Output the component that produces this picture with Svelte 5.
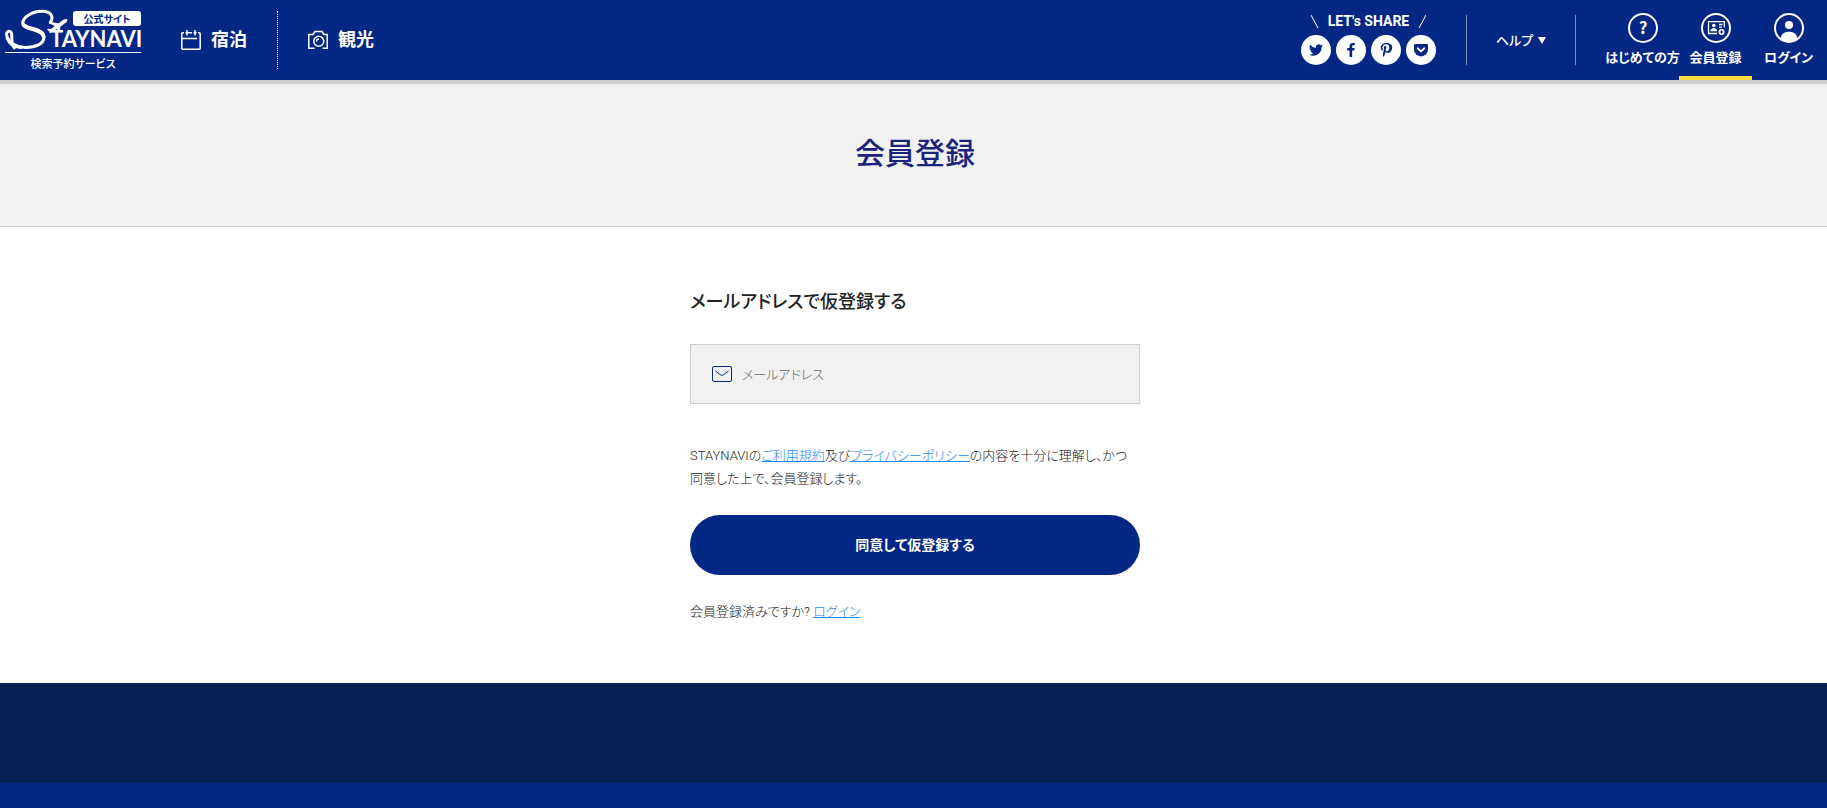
<script>
  let email = "";
</script>

<div class="page">
  <header class="header">
    <a class="logo" href="#/" aria-label="STAYNAVI">
      <svg width="138" height="62" viewBox="5 10 138 62">
        <g transform="scale(0.3333)" fill="none" stroke="#fff" stroke-linecap="round">
          <path
            stroke-width="9"
            d="M151 70C160 58 158 40 132 37C98 34 64 56 69 77C74 93 122 88 131 112C136 134 104 147 70 145C44 143 24 129 20 109C18 96 33 92 35 104C36 120 34 137 43 147"
          />
          <path stroke-width="12" d="M72 79C82 92 126 88 131 112" />
          <path stroke-width="10" d="M22 117C27 132 42 143 62 145" />
          <path
            fill="#fff"
            stroke="none"
            d="M200 59C205 63 201 69 195 73L181 83L180 98L174 99L171 90L157 98C151 104 147 103 148 97L141 92L144 89L153 90L165 81L147 73L151 69L176 73L190 62Z"
          />
        </g>
        <rect x="73" y="12" width="68" height="15" rx="3" fill="#fff" />
        <text class="badge" x="107" y="24" text-anchor="middle">公式サイト</text>
        <text class="brand" x="50" y="48">TAYNAVI</text>
        <path d="M5 53.500H141" stroke="#fff" />
        <text class="sub" x="73" y="69" text-anchor="middle">検索予約サービス</text>
      </svg>
    </a>

    <nav class="main-nav">
      <a href="#/stay">
        <svg width="20" height="20" viewBox="0 0 20 20" fill="none" stroke="#fff" stroke-width="1.500">
          <path d="M3 2.800H1.800Q.8 2.800 .8 3.800V18.200Q.8 19.200 1.800 19.200H18.200Q19.200 19.200 19.200 18.200V3.800Q19.200 2.800 18.200 2.800H17M1 8.500H16" />
          <path d="M6 0V5.500M14 0V5.500M4.500 2.800H11M12.500 2.800H15.500" />
        </svg>
        宿泊
      </a>
      <a href="#/tour">
        <svg width="20" height="20" viewBox="0 0 20 20" fill="none" stroke="#fff" stroke-width="1.500">
          <path d="M6.500 18.200H.8V4.500H5L7 1.500H14L16 4.500H19.200V18.200H14.500" />
          <circle cx="10.800" cy="11.200" r="5" />
          <path d="M8.500 11.500Q8.500 9 11 9" stroke-width="1.300" />
        </svg>
        観光
      </a>
    </nav>

    <div class="share">
      <p>
        <svg width="8" height="13" viewBox="0 0 8 13" stroke="#fff"><path d="M0 0L7 13" /></svg>
        <span>LET's SHARE</span>
        <svg width="8" height="13" viewBox="0 0 8 13" stroke="#fff"><path d="M8 0L1 13" /></svg>
      </p>
      <div class="share-icons">
        <a href="#/twitter" aria-label="Twitter">
          <svg width="14" height="14" viewBox="0 0 24 24">
            <path d="M24 4.600a10 10 0 0 1-2.800.8 5 5 0 0 0 2.100-2.700 10 10 0 0 1-3.100 1.200 4.900 4.900 0 0 0-8.400 4.500A14 14 0 0 1 1.700 3.200a4.900 4.900 0 0 0 1.500 6.500 5 5 0 0 1-2.200-.6 4.900 4.900 0 0 0 4 4.900 5 5 0 0 1-2.300.1 4.900 4.900 0 0 0 4.600 3.400A9.900 9.900 0 0 1 0 19.500a14 14 0 0 0 21.500-12.400A10 10 0 0 0 24 4.600z" />
          </svg>
        </a>
        <a href="#/facebook" aria-label="Facebook">
          <svg width="14" height="14" viewBox="0 0 24 24">
            <path d="M9.500 24V13H5.500V8.700H9.500V5.500C9.500 1.800 11.600 0 15 0H18.500V4H16C14.500 4 14 4.700 14 6V8.700H18.400L17.700 13H14V24Z" />
          </svg>
        </a>
        <a href="#/pinterest" aria-label="Pinterest">
          <svg width="14" height="14" viewBox="0 0 24 24">
            <path d="M12.400 0C6.200 0 3 4.200 3 8.100c0 2.300.9 4.400 2.800 5.200.3.100.6 0 .7-.4l.3-1.200c.1-.3 0-.5-.2-.8-.6-.6-.9-1.500-.9-2.600 0-3.400 2.500-6.300 6.500-6.300 3.600 0 5.500 2.200 5.500 5.100 0 3.800-1.700 7.100-4.200 7.100-1.400 0-2.400-1.200-2.100-2.500.4-1.700 1.200-3.500 1.200-4.700 0-1.100-.6-2-1.800-2-1.400 0-2.500 1.500-2.500 3.400 0 1.300.4 2.100.4 2.100L7 17.700c-.5 2.100-.1 4.800 0 5.900.1.400.4.400.6.200.3-.4 2-2.500 2.700-4.800l1-4c.5 1 2 1.800 3.500 1.800 4.700 0 7.900-4.300 7.900-10C22.700 3.300 18.400 0 12.400 0z" />
          </svg>
        </a>
        <a href="#/pocket" aria-label="Pocket">
          <svg width="14" height="14" viewBox="0 0 24 24">
            <path d="M2.200 1.500H21.800Q24 1.500 24 3.700V11A12 12 0 0 1 0 11V3.700Q0 1.500 2.200 1.500Z" />
            <path d="M6.200 9L12 14.500L17.800 9" fill="none" stroke="#fff" stroke-width="3" stroke-linecap="round" stroke-linejoin="round" />
          </svg>
        </a>
      </div>
    </div>

    <button class="help" type="button">
      ヘルプ
      <svg width="8" height="7" viewBox="0 0 8 7" fill="#fff"><path d="M0 0H8L4 7Z" /></svg>
    </button>

    <nav class="user-nav">
      <a href="#/guide">
        <svg width="30" height="30" viewBox="0 0 30 30">
          <circle cx="15" cy="15" r="14" fill="none" stroke="#fff" stroke-width="2" />
          <text class="question" x="15" y="21" text-anchor="middle">?</text>
        </svg>
        はじめての方
      </a>
      <a class="active" href="#/register">
        <svg width="30" height="30" viewBox="0 0 30 30" fill="none" stroke="#fff">
          <circle cx="15" cy="15" r="14" stroke-width="2" />
          <path stroke-width="1.300" d="M16 20.500H7.500V8.700H23.300V14.500M18 11.500H21.500M18 14.200H21M9.500 17.500H16" />
          <circle cx="12.800" cy="12.500" r="1.800" fill="#fff" stroke="none" />
          <path d="M10 17.500Q10 15 12.800 15T15.600 17.500Z" fill="#fff" stroke="none" />
          <circle cx="20.500" cy="19" r="3" fill="#fff" stroke="none" />
          <path d="M20.500 17.300V20.700M18.800 19H22.200" stroke="#032784" />
        </svg>
        会員登録
      </a>
      <a href="#/login">
        <svg width="30" height="30" viewBox="0 0 30 30">
          <circle cx="15" cy="15" r="14" fill="none" stroke="#fff" stroke-width="2" />
          <circle cx="15" cy="12" r="4" fill="#fff" />
          <path d="M6.500 26C7 21 10 18.800 15 18.800S23 21 23.500 26Q15 32 6.500 26Z" fill="#fff" />
        </svg>
        ログイン
      </a>
    </nav>
  </header>

  <div class="title">
    <h1>会員登録</h1>
  </div>

  <main>
    <form on:submit|preventDefault>
      <h2><label for="email">メールアドレスで仮登録する</label></h2>
      <div class="field">
        <svg width="20" height="16" viewBox="0 0 20 16" fill="none" stroke="#032784">
          <rect x="0.500" y="0.500" width="19" height="15" rx="1.500" />
          <path d="M3.500 5L8.500 8.800Q10 9.800 11.500 8.800L16.500 5" />
        </svg>
        <input id="email" type="email" bind:value={email} placeholder="メールアドレス" />
      </div>
      <p class="terms">
        STAYNAVIの<a href="#/terms">ご利用規約</a>及び<a href="#/privacy">プライバシーポリシー</a>の内容を十分に理解し、かつ同意した上で、会員登録します。
      </p>
      <button class="submit" type="submit">同意して仮登録する</button>
      <p>会員登録済みですか? <a href="#/login">ログイン</a></p>
    </form>
  </main>

  <footer></footer>
</div>

<style>
  :global(body) {
    margin: 0;
  }
  .page {
    display: flex;
    flex-direction: column;
    min-height: 100vh;
    background: #032784;
    color: #222;
    font-family: Roboto, "Noto Sans CJK JP", sans-serif;
    font-size: 13px;
    font-weight: 300;
    font-feature-settings: "palt";
    line-height: 23px;
  }
  h1,
  h2,
  p {
    margin: 0;
  }
  .header {
    display: flex;
    align-items: center;
    height: 80px;
    padding: 0 2px 0 5px;
    border-bottom: 4px solid #ccc;
    background: #032784;
  }
  .header a {
    color: #fff;
    text-decoration: none;
  }
  .logo svg {
    display: block;
  }
  .logo text {
    fill: #fff;
  }
  .logo .badge {
    fill: #032784;
    font-size: 10px;
    font-weight: 700;
  }
  .logo .brand {
    font-family: Lato, sans-serif;
    font-size: 22px;
    font-weight: 700;
  }
  .logo .sub {
    font-size: 11px;
    font-weight: 500;
  }
  .main-nav {
    display: flex;
    margin-right: auto;
    margin-left: 8px;
  }
  .main-nav a {
    display: flex;
    align-items: center;
    gap: 10px;
    padding: 0 30px;
    font-size: 18px;
    font-weight: 700;
    line-height: 58px;
  }
  .main-nav a + a {
    border-left: 1px dotted #fff;
  }
  .share {
    padding-right: 30px;
  }
  .share p {
    display: flex;
    align-items: center;
    justify-content: center;
    gap: 9px;
    margin-bottom: 7px;
    color: #fff;
    font-size: 14px;
    font-weight: 700;
    line-height: 13px;
  }
  .share-icons {
    display: flex;
    gap: 5px;
  }
  .share-icons a {
    display: flex;
    align-items: center;
    justify-content: center;
    width: 30px;
    height: 30px;
    border-radius: 50%;
    background: #fff;
  }
  .share-icons svg {
    fill: #032784;
  }
  .help {
    display: flex;
    align-items: center;
    justify-content: center;
    gap: 5px;
    width: 110px;
    height: 50px;
    padding: 0;
    border: solid #8091c0;
    border-width: 0 1px;
    background: none;
    color: #fff;
    font: inherit;
    font-weight: 500;
  }
  .user-nav {
    display: flex;
    align-self: stretch;
    margin-left: 30px;
  }
  .user-nav a {
    display: flex;
    flex-direction: column;
    align-items: center;
    box-sizing: border-box;
    width: 73px;
    padding-top: 13px;
    border-bottom: 4px solid transparent;
    font-weight: 700;
    line-height: 29px;
    white-space: nowrap;
  }
  .user-nav a.active {
    border-color: #ffdc38;
  }
  .question {
    fill: #fff;
    font-family: "Noto Sans CJK JP", sans-serif;
    font-size: 17px;
  }
  .title {
    padding: 48px 0 50px 3px;
    border-bottom: 1px solid #ccc;
    background: #f1f1f1;
    color: #1a237e;
    text-align: center;
  }
  h1 {
    font-size: 30px;
    font-weight: 500;
    line-height: 44px;
  }
  main {
    padding: 60px 20px 60px 23px;
    background: #fff;
  }
  form {
    max-width: 450px;
    margin: 0 auto;
  }
  h2 {
    font-size: 18px;
    font-weight: 500;
    line-height: 30px;
  }
  .field {
    display: flex;
    align-items: center;
    gap: 10px;
    box-sizing: border-box;
    height: 60px;
    margin: 27px 0 40px;
    padding: 0 21px;
    border: 1px solid #ccc;
    background: #f1f1f1;
  }
  .field input {
    flex: 1;
    padding: 0;
    border: 0;
    outline: 0;
    background: none;
    color: #222;
    font: inherit;
    font-feature-settings: inherit;
  }
  .field input::placeholder {
    color: #666;
  }
  main a {
    color: #1e88f5;
  }
  .submit {
    display: block;
    width: 100%;
    height: 60px;
    margin: 25px 0;
    border: 0;
    border-radius: 30px;
    background: #032784;
    color: #fff;
    font: inherit;
    font-size: 14px;
    font-weight: 700;
    font-feature-settings: inherit;
  }
  footer {
    height: 100px;
    background: #082253;
  }
</style>
